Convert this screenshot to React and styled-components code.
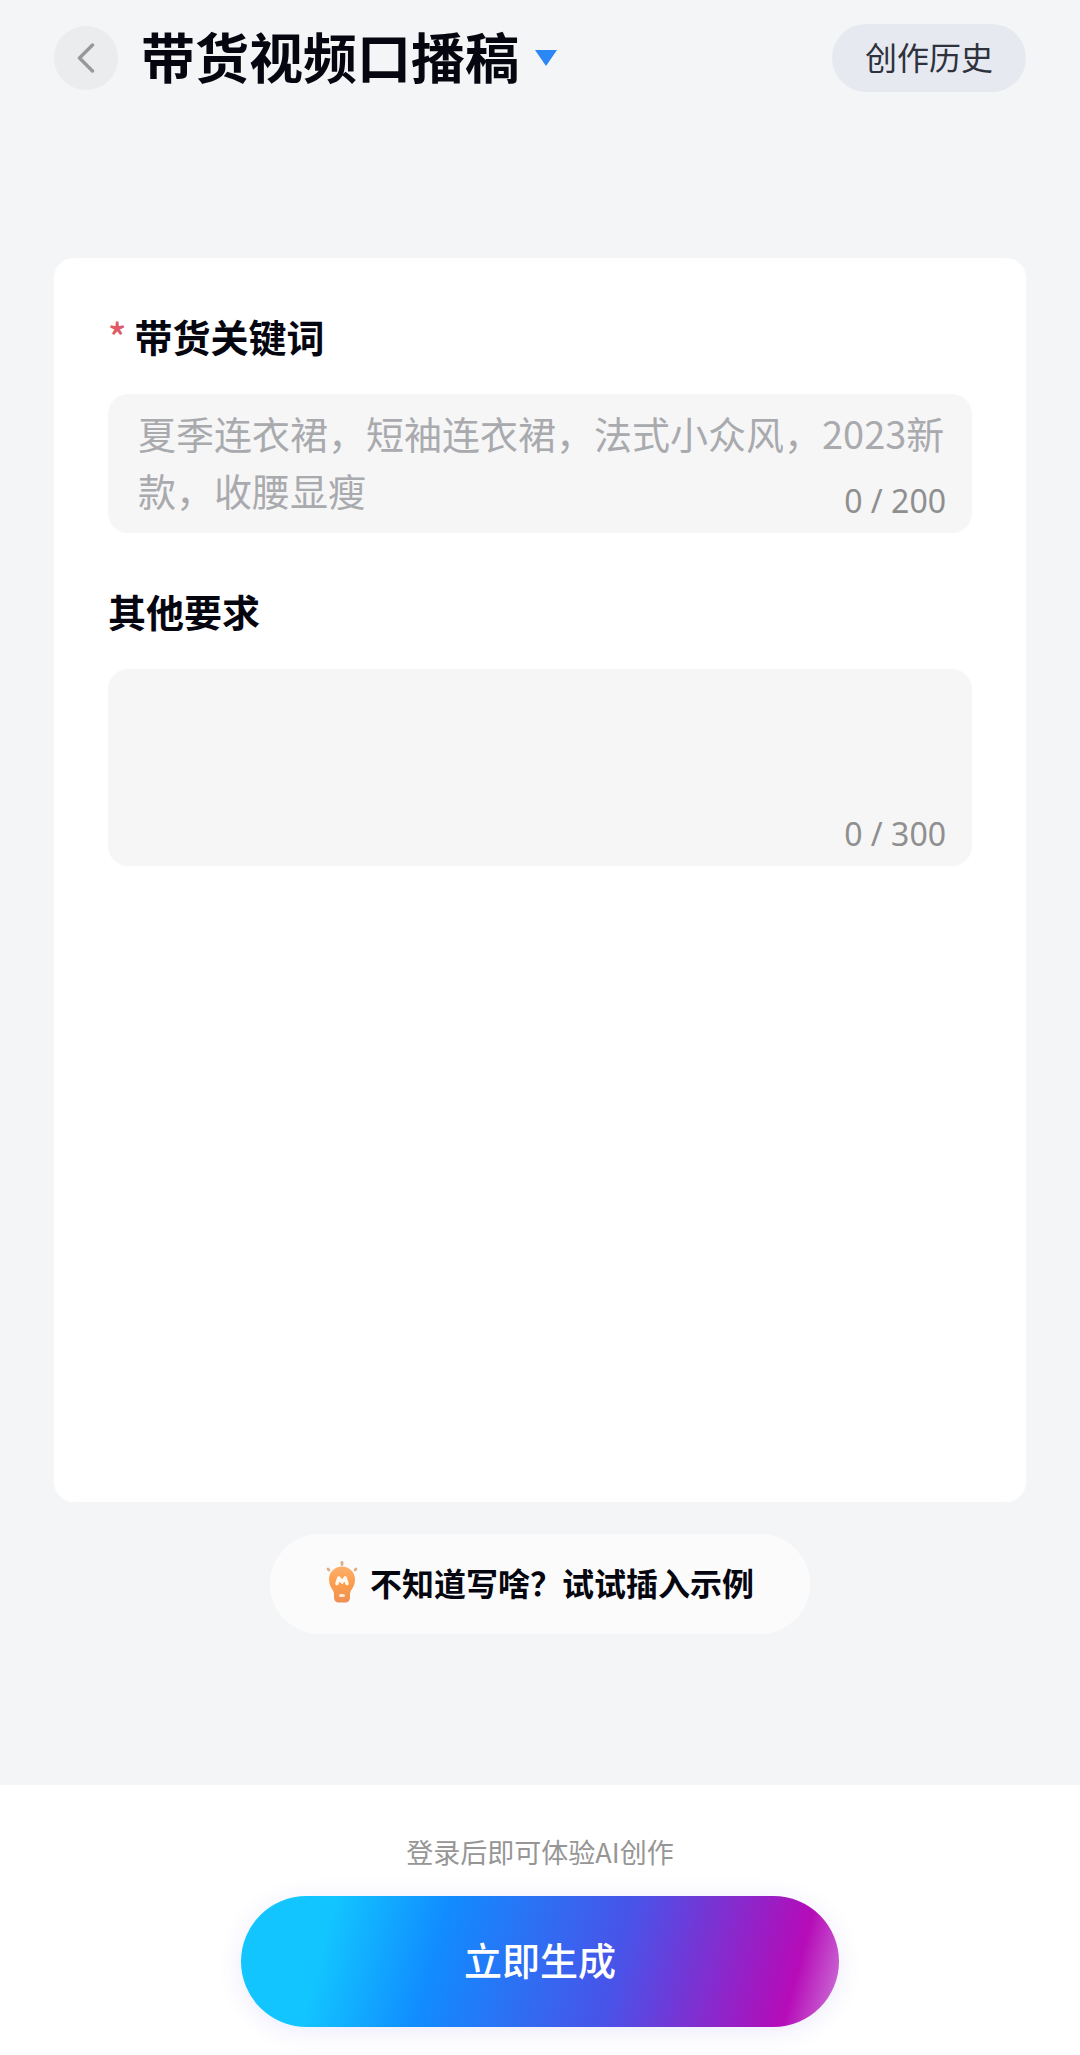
import React, { useState } from 'react'
import styled, { createGlobalStyle } from 'styled-components'

const GlobalStyle = createGlobalStyle`
    * {
        box-sizing: border-box;
    }
    body {
        margin: 0;
        background-color: #f4f5f7;
        font-family: "Noto Sans CJK SC", "Noto Sans", sans-serif;
    }
    button, textarea {
        font-family: inherit;
    }
    button {
        border: none;
        cursor: pointer;
    }
`

const Page = styled.div`
    min-height: 100vh;
    display: flex;
    flex-direction: column;
    color: #05060f;
`

const Header = styled.header`
    display: flex;
    align-items: center;
    padding: 24px 54px;
`

const BackButton = styled.button`
    display: flex;
    align-items: center;
    justify-content: center;
    width: 64px;
    height: 64px;
    padding: 0;
    border-radius: 50%;
    background-color: #ebecee;
`

const TitleButton = styled.button`
    display: flex;
    align-items: center;
    gap: 16px;
    margin-left: 23px;
    padding: 0;
    background: transparent;
    color: inherit;
`

const Title = styled.h1`
    margin: 0;
    padding-bottom: 4px;
    font-size: 54px;
    line-height: 60px;
    font-weight: 700;
`

const HistoryButton = styled.button`
    height: 68px;
    margin-left: auto;
    padding: 0 33px 4px;
    border-radius: 34px;
    background-color: #e6e9f0;
    color: #2f323c;
    font-size: 32px;
    line-height: 64px;
`

const Main = styled.main`
    flex: 1;
    display: flex;
    flex-direction: column;
    align-items: center;
    padding: 142px 54px 151px;
`

const Card = styled.form`
    flex: 1;
    align-self: stretch;
    padding: 48px 54px;
    border-radius: 20px;
    background-color: #fff;
`

const Field = styled.div`
    margin-bottom: 48px;
`

const Label = styled.label`
    display: flex;
    gap: 8px;
    margin-bottom: 28px;
    font-size: 38px;
    line-height: 60px;
    font-weight: 700;
`

const Required = styled.span`
    color: #e05a66;
    font-weight: 500;
`

const Box = styled.div`
    position: relative;
    display: flex;
    height: ${({ $height }) => $height}px;
    border-radius: 20px;
    background-color: #f6f6f7;
`

const TextArea = styled.textarea`
    flex: 1;
    padding: 10px 20px 10px 30px;
    border: none;
    outline: none;
    resize: none;
    overflow: hidden;
    background: transparent;
    color: #05060f;
    font-size: 38px;
    line-height: 57px;

    &::placeholder {
        color: #a9aaae;
        opacity: 1;
    }
`

const Counter = styled.span`
    position: absolute;
    right: 26px;
    bottom: 12px;
    color: #8f8f8f;
    font-family: "Noto Sans", sans-serif;
    font-size: 32px;
    line-height: 40px;
    pointer-events: none;
`

const TipButton = styled.button`
    display: flex;
    align-items: center;
    gap: 12px;
    height: 100px;
    margin-top: 32px;
    padding: 0 56px 4px;
    border-radius: 50px;
    background-color: #fbfbfc;
    color: #05060f;
    font-size: 32px;
    font-weight: 700;
`

const Footer = styled.footer`
    display: flex;
    flex-direction: column;
    align-items: center;
    padding: 47px 54px 28px;
    background-color: #fff;
`

const Hint = styled.p`
    margin: 0 0 24px;
    color: #969696;
    font-size: 27px;
    line-height: 40px;
`

const SubmitButton = styled.button`
    width: 100%;
    max-width: 598px;
    height: 131px;
    padding-bottom: 8px;
    border-radius: 66px;
    background: linear-gradient(105deg, #12c5ff 15%, #118cff 33%, #4a52e8 63%, #b60bb8 91%, #c964d2 98%);
    box-shadow: 0 4px 24px rgba(90, 80, 230, 0.12);
    color: #fff;
    font-size: 38px;
    font-weight: 500;
`

const BackIcon = () => (
    <svg width="18" height="30" viewBox="0 0 18 30" fill="none" aria-hidden="true">
        <path d="M15.500 2L2.500 15L15.500 28" stroke="#979899" strokeWidth="3.400" strokeLinecap="round" strokeLinejoin="round" />
    </svg>
)

const CaretIcon = () => (
    <svg width="22" height="16" viewBox="0 0 22 16" aria-hidden="true">
        <path d="M0 0H22L11 16Z" fill="#2b87f3" />
    </svg>
)

const BulbIcon = () => (
    <svg width="32" height="42" viewBox="0 0 32 42" fill="none" aria-hidden="true">
        <defs>
            <linearGradient id="bulb" x1="16" y1="5" x2="16" y2="42" gradientUnits="userSpaceOnUse">
                <stop stopColor="#fdb06c" />
                <stop offset="0.500" stopColor="#fb9c4c" />
                <stop offset="1" stopColor="#ee9055" />
            </linearGradient>
        </defs>
        <path d="M16 1.500V3.500M2 8L3 9M30 8L29 9" stroke="#dcae84" strokeWidth="2.800" strokeLinecap="round" />
        <path d="M16 5.500C8.800 5.500 3 11 3 18.500C3 23.500 5 26.500 7 29.500C8 31 8 32.500 8 35V36.500C8 39.500 10 41.500 13 41.500H19C22 41.500 24 39.500 24 36.500V35C24 32.500 24 31 25 29.500C27 26.500 29 23.500 29 18.500C29 11 23.200 5.500 16 5.500Z" fill="url(#bulb)" />
        <path d="M11 22.500L12.800 17L16 21L19.200 17L21 22.500" stroke="#fff8ee" strokeWidth="3.600" strokeLinecap="round" strokeLinejoin="round" />
        <path d="M14.500 34.500H17.500" stroke="#ffe9d2" strokeWidth="3" strokeLinecap="round" />
    </svg>
)

const fields = [
    {
        id: 'keywords',
        label: '带货关键词',
        placeholder: '夏季连衣裙，短袖连衣裙，法式小众风，2023新款，收腰显瘦',
        max: 200,
        height: 139,
        required: true,
    },
    { id: 'others', label: '其他要求', placeholder: '', max: 300, height: 197, required: false },
]

const App = () => {
    const [values, setValues] = useState({ keywords: '', others: '' })

    return (
        <Page>
            <GlobalStyle />
            <Header>
                <BackButton type="button" aria-label="返回">
                    <BackIcon />
                </BackButton>
                <TitleButton type="button">
                    <Title>带货视频口播稿</Title>
                    <CaretIcon />
                </TitleButton>
                <HistoryButton type="button">创作历史</HistoryButton>
            </Header>

            <Main>
                <Card id="create">
                    {fields.map((field) => (
                        <Field key={field.id}>
                            <Label htmlFor={field.id}>
                                {field.required && <Required>*</Required>}
                                {field.label}
                            </Label>
                            <Box $height={field.height}>
                                <TextArea
                                    id={field.id}
                                    placeholder={field.placeholder}
                                    maxLength={field.max}
                                    value={values[field.id]}
                                    onChange={(e) => setValues({ ...values, [field.id]: e.target.value })}
                                />
                                <Counter>{`${values[field.id].length} / ${field.max}`}</Counter>
                            </Box>
                        </Field>
                    ))}
                </Card>
                <TipButton type="button">
                    <BulbIcon />
                    不知道写啥？试试插入示例
                </TipButton>
            </Main>

            <Footer>
                <Hint>登录后即可体验AI创作</Hint>
                <SubmitButton type="button">立即生成</SubmitButton>
            </Footer>
        </Page>
    )
}

export default App
